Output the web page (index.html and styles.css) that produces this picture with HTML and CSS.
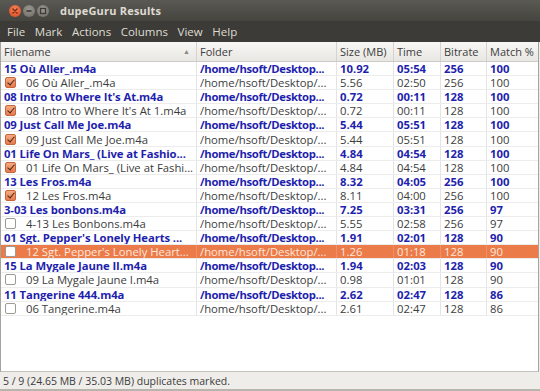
FILE: index.html
```html
<!DOCTYPE html>
<html>
<head>
<meta charset="utf-8">
<link rel="stylesheet" href="styles.css">
</head>
<body>
<div class="window">
  <div class="titlebar">
    <div class="wbtns">
      <span class="wbtn close"><svg width="12" height="12" viewBox="0 0 12 12"><path d="M4 4L8 8M8 4L4 8" stroke="#7a2a10" stroke-width="1.4" stroke-linecap="round"/></svg></span>
      <span class="wbtn other"><svg width="12" height="12" viewBox="0 0 12 12"><path d="M3.5 6H8.5" stroke="#3a3935" stroke-width="1.6"/></svg></span>
      <span class="wbtn other"><svg width="12" height="12" viewBox="0 0 12 12"><rect x="3.5" y="3.5" width="5" height="5" fill="none" stroke="#3a3935" stroke-width="1.2"/></svg></span>
    </div>
    <span class="title">dupeGuru Results</span>
  </div>
  <div class="menubar">
    <span class="menu">File</span>
    <span class="menu">Mark</span>
    <span class="menu">Actions</span>
    <span class="menu">Columns</span>
    <span class="menu">View</span>
    <span class="menu">Help</span>
  </div>
  <div class="list">
    <div class="head">
      <div class="hcell first"><span>Filename</span><span class="sort">▲</span></div>
      <div class="hcell">Folder</div>
      <div class="hcell">Size (MB)</div>
      <div class="hcell">Time</div>
      <div class="hcell">Bitrate</div>
      <div class="hcell">Match %</div>
    </div>
    <div class="rows">
      <div class="row ref"><div class="c name">15 Où Aller_.m4a</div><div class="c">/home/hsoft/Desktop...</div><div class="c">10.92</div><div class="c">05:54</div><div class="c">256</div><div class="c">100</div></div>
      <div class="row dup"><div class="c name"><span class="cb on"></span>06 Où Aller_.m4a</div><div class="c">/home/hsoft/Desktop/...</div><div class="c">5.56</div><div class="c">02:50</div><div class="c">256</div><div class="c">100</div></div>
      <div class="row ref"><div class="c name">08 Intro to Where It's At.m4a</div><div class="c">/home/hsoft/Desktop...</div><div class="c">0.72</div><div class="c">00:11</div><div class="c">128</div><div class="c">100</div></div>
      <div class="row dup"><div class="c name"><span class="cb on"></span>08 Intro to Where It's At 1.m4a</div><div class="c">/home/hsoft/Desktop/...</div><div class="c">0.72</div><div class="c">00:11</div><div class="c">128</div><div class="c">100</div></div>
      <div class="row ref"><div class="c name">09 Just Call Me Joe.m4a</div><div class="c">/home/hsoft/Desktop...</div><div class="c">5.44</div><div class="c">05:51</div><div class="c">128</div><div class="c">100</div></div>
      <div class="row dup"><div class="c name"><span class="cb on"></span>09 Just Call Me Joe.m4a</div><div class="c">/home/hsoft/Desktop/...</div><div class="c">5.44</div><div class="c">05:51</div><div class="c">128</div><div class="c">100</div></div>
      <div class="row ref"><div class="c name">01 Life On Mars_ (Live at Fashio...</div><div class="c">/home/hsoft/Desktop...</div><div class="c">4.84</div><div class="c">04:54</div><div class="c">128</div><div class="c">100</div></div>
      <div class="row dup"><div class="c name"><span class="cb on"></span>01 Life On Mars_ (Live at Fashi...</div><div class="c">/home/hsoft/Desktop/...</div><div class="c">4.84</div><div class="c">04:54</div><div class="c">128</div><div class="c">100</div></div>
      <div class="row ref"><div class="c name">13 Les Fros.m4a</div><div class="c">/home/hsoft/Desktop...</div><div class="c">8.32</div><div class="c">04:05</div><div class="c">256</div><div class="c">100</div></div>
      <div class="row dup"><div class="c name"><span class="cb on"></span>12 Les Fros.m4a</div><div class="c">/home/hsoft/Desktop/...</div><div class="c">8.11</div><div class="c">04:00</div><div class="c">256</div><div class="c">100</div></div>
      <div class="row ref"><div class="c name">3-03 Les bonbons.m4a</div><div class="c">/home/hsoft/Desktop...</div><div class="c">7.25</div><div class="c">03:31</div><div class="c">256</div><div class="c">97</div></div>
      <div class="row dup"><div class="c name"><span class="cb"></span>4-13 Les Bonbons.m4a</div><div class="c">/home/hsoft/Desktop/...</div><div class="c">5.55</div><div class="c">02:58</div><div class="c">256</div><div class="c">97</div></div>
      <div class="row ref"><div class="c name">01 Sgt. Pepper's Lonely Hearts ...</div><div class="c">/home/hsoft/Desktop...</div><div class="c">1.91</div><div class="c">02:01</div><div class="c">128</div><div class="c">90</div></div>
      <div class="row dup sel"><div class="c name"><span class="cb"></span>12 Sgt. Pepper's Lonely Heart...</div><div class="c">/home/hsoft/Desktop/...</div><div class="c">1.26</div><div class="c">01:18</div><div class="c">128</div><div class="c">90</div></div>
      <div class="row ref"><div class="c name">15 La Mygale Jaune II.m4a</div><div class="c">/home/hsoft/Desktop...</div><div class="c">1.94</div><div class="c">02:03</div><div class="c">128</div><div class="c">90</div></div>
      <div class="row dup"><div class="c name"><span class="cb"></span>09 La Mygale Jaune I.m4a</div><div class="c">/home/hsoft/Desktop/...</div><div class="c">0.98</div><div class="c">01:01</div><div class="c">128</div><div class="c">90</div></div>
      <div class="row ref"><div class="c name">11 Tangerine 444.m4a</div><div class="c">/home/hsoft/Desktop...</div><div class="c">2.62</div><div class="c">02:47</div><div class="c">128</div><div class="c">86</div></div>
      <div class="row dup"><div class="c name"><span class="cb"></span>06 Tangerine.m4a</div><div class="c">/home/hsoft/Desktop/...</div><div class="c">2.61</div><div class="c">02:47</div><div class="c">128</div><div class="c">86</div></div>
    </div>
  </div>
  <div class="statusbar">5 / 9 (24.65 MB / 35.03 MB) duplicates marked.</div>
</div>
</body>
</html>
```

FILE: styles.css
```css
* { box-sizing: border-box; }
html, body { margin: 0; padding: 0; background: #3c3b37; }
body { font-family: "Open Sans", "Noto Sans", sans-serif; font-size: 11.3px; color: #3c3c3c; }
.window { width: 540px; height: 391px; display: flex; flex-direction: column; background: #efedea; overflow: hidden; }
.titlebar { height: 21px; background: linear-gradient(#5a5954, #45443f); display: flex; align-items: center; color: #dfdbd2; }
.wbtns { display: flex; gap: 2px; padding-left: 9px; width: 60px; }
.wbtn { width: 12px; height: 12px; border-radius: 50%; display: flex; }
.wbtn.close { background: radial-gradient(circle at 50% 35%, #f6845a, #d9461c); }
.wbtn.other { background: radial-gradient(circle at 50% 35%, #9a9891, #6c6a64); }
.title { font-weight: bold; font-size: 11px; letter-spacing: 0.2px; }
.menubar { height: 21px; background: #3c3b37; display: flex; align-items: center; padding-left: 7px; gap: 0; color: #dfdbd2; font-size: 11.5px; }
.menu { margin-right: 9.6px; }
.list { flex: 1; background: #fff; border-left: 1px solid #a5a39e; border-right: 1px solid #a5a39e; border-bottom: 1px solid #c4c1bb; margin-right: 1px; display: flex; flex-direction: column; }
.head, .row { display: grid; grid-template-columns: 196px 140px 57px 47px 46px 1fr; }
.head { height: 20px; background: linear-gradient(#f8f7f5, #e9e7e3); border-bottom: 1px solid #cfccc6; font-size: 11px; }
.hcell { display: flex; align-items: center; padding-left: 3px; border-right: 1px solid #d6d3cd; white-space: nowrap; }
.hcell:last-child { border-right: none; }
.hcell.first { justify-content: space-between; padding-right: 6px; }
.sort { font-size: 7px; color: #8a8884; }
.row { height: 14.1px; line-height: 13px; border-bottom: 1px solid #ececec; }
.c { padding-left: 3px; white-space: nowrap; overflow: hidden; border-right: 1px solid #e4e4e4; display: flex; align-items: center; }
.c:last-child { border-right: none; }
.row.ref { color: #1f1fae; font-weight: bold; font-size: 11.3px; }
.row.ref .c.name { padding-left: 3px; letter-spacing: -0.1px; }
.row.ref .c:nth-child(2) { letter-spacing: -0.35px; }
.row.dup .c.name { padding-left: 4px; }
.row.sel { background: #ec7b4a; color: #fde6da; }
.row.sel .c { border-right-color: #ef9068; }
.cb { width: 11px; height: 11px; border: 1px solid #9d9a94; border-radius: 2px; background: #fff; margin-right: 10px; flex: none; position: relative; }
.cb.on { background: linear-gradient(#f5a983, #e57b4e); border-color: #c7653b; }
.cb.on::after { content: ""; position: absolute; left: 3px; top: 0px; width: 3px; height: 6px; border: solid #4a2514; border-width: 0 1.6px 1.6px 0; transform: rotate(40deg); }
.statusbar { height: 19px; padding-left: 3px; display: flex; align-items: center; font-size: 10.5px; color: #3c3c3c; border-bottom: 2px solid #b8b5af; }
```
